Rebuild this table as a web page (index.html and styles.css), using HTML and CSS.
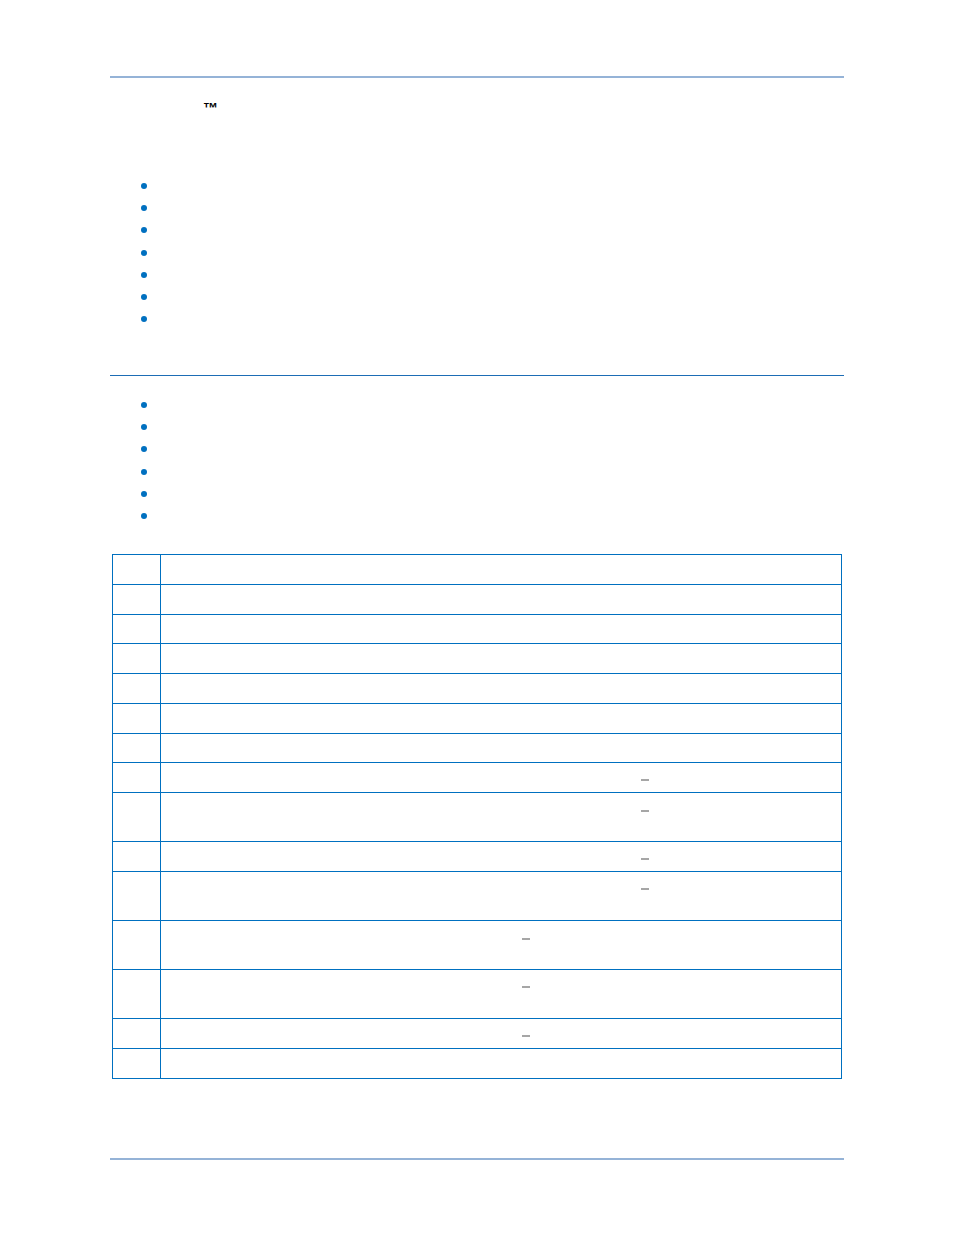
FILE: index.html
```html
<!DOCTYPE html>
<html lang="en">
<head>
<meta charset="utf-8">
<title>Document page</title>
<link rel="stylesheet" href="styles.css">
</head>
<body>
<div class="page">
  <div class="rule-top"></div>
  <div class="title"><span class="tm">™</span></div>

  <ul class="list list-one">
    <li><span class="dot"></span></li>
    <li><span class="dot"></span></li>
    <li><span class="dot"></span></li>
    <li><span class="dot"></span></li>
    <li><span class="dot"></span></li>
    <li><span class="dot"></span></li>
    <li><span class="dot"></span></li>
  </ul>

  <div class="rule-section"></div>

  <ul class="list list-two">
    <li><span class="dot"></span></li>
    <li><span class="dot"></span></li>
    <li><span class="dot"></span></li>
    <li><span class="dot"></span></li>
    <li><span class="dot"></span></li>
    <li><span class="dot"></span></li>
  </ul>

  <div class="tbl">
    <div class="row"><div class="c1"></div><div class="c2"></div></div>
    <div class="row"><div class="c1"></div><div class="c2"></div></div>
    <div class="row h29"><div class="c1"></div><div class="c2"></div></div>
    <div class="row"><div class="c1"></div><div class="c2"></div></div>
    <div class="row"><div class="c1"></div><div class="c2"></div></div>
    <div class="row"><div class="c1"></div><div class="c2"></div></div>
    <div class="row h29"><div class="c1"></div><div class="c2"></div></div>
    <div class="row"><div class="c1"></div><div class="c2"><span class="dash far"></span></div></div>
    <div class="row tall"><div class="c1"></div><div class="c2"><span class="dash far lower"></span></div></div>
    <div class="row"><div class="c1"></div><div class="c2"><span class="dash far"></span></div></div>
    <div class="row tall"><div class="c1"></div><div class="c2"><span class="dash far"></span></div></div>
    <div class="row tall"><div class="c1"></div><div class="c2"><span class="dash near lower"></span></div></div>
    <div class="row tall"><div class="c1"></div><div class="c2"><span class="dash near"></span></div></div>
    <div class="row"><div class="c1"></div><div class="c2"><span class="dash near"></span></div></div>
    <div class="row"><div class="c1"></div><div class="c2"></div></div>
  </div>

  <div class="rule-bottom"></div>
</div>
</body>
</html>
```

FILE: styles.css
```css
html, body {
  margin: 0;
  padding: 0;
  background: #ffffff;
}

body {
  font-family: "Liberation Sans", Arial, sans-serif;
  color: #000000;
}

.page {
  width: 734px;
  margin-left: 110px;
  padding-top: 76px;
  padding-bottom: 75px;
}

.rule-top,
.rule-bottom {
  height: 2px;
  background: #95b3d7;
}

.rule-bottom {
  margin-top: 79px;
}

.title {
  margin-top: 22px;
  padding-left: 93px;
  height: 16px;
  line-height: 16px;
  font-size: 15px;
  font-weight: bold;
}

.list {
  list-style: none;
  margin: 0;
  padding: 0 0 0 31px;
}

.list li {
  height: 22.2px;
  display: flex;
  align-items: center;
}

.list-one {
  margin-top: 59px;
}

.list-two {
  margin-top: 17px;
}

.list-two li {
  height: 22.4px;
}

.dot {
  width: 6px;
  height: 6px;
  border-radius: 50%;
  background: #0070c0;
}

.rule-section {
  margin-top: 45px;
  height: 1px;
  background: #1d6db5;
}

.tbl {
  margin-top: 26px;
  margin-left: 2px;
  width: 730px;
  box-sizing: border-box;
  border: 1px solid #0070c0;
  border-top: none;
}

.row {
  display: flex;
  height: 30px;
  box-sizing: border-box;
  border-top: 1px solid #0070c0;
}

.row.h29 {
  height: 29px;
}

.row.tall {
  height: 49px;
}

.c1 {
  width: 48px;
  flex: none;
  box-sizing: border-box;
  border-right: 1px solid #0070c0;
}

.c2 {
  flex: 1;
  padding-top: 16px;
}

.dash {
  display: block;
  width: 8px;
  height: 2px;
  background: #a6a6a6;
}

.dash.far {
  margin-left: 480px;
}

.dash.near {
  margin-left: 361px;
}

.dash.lower {
  margin-top: 1px;
}
```
